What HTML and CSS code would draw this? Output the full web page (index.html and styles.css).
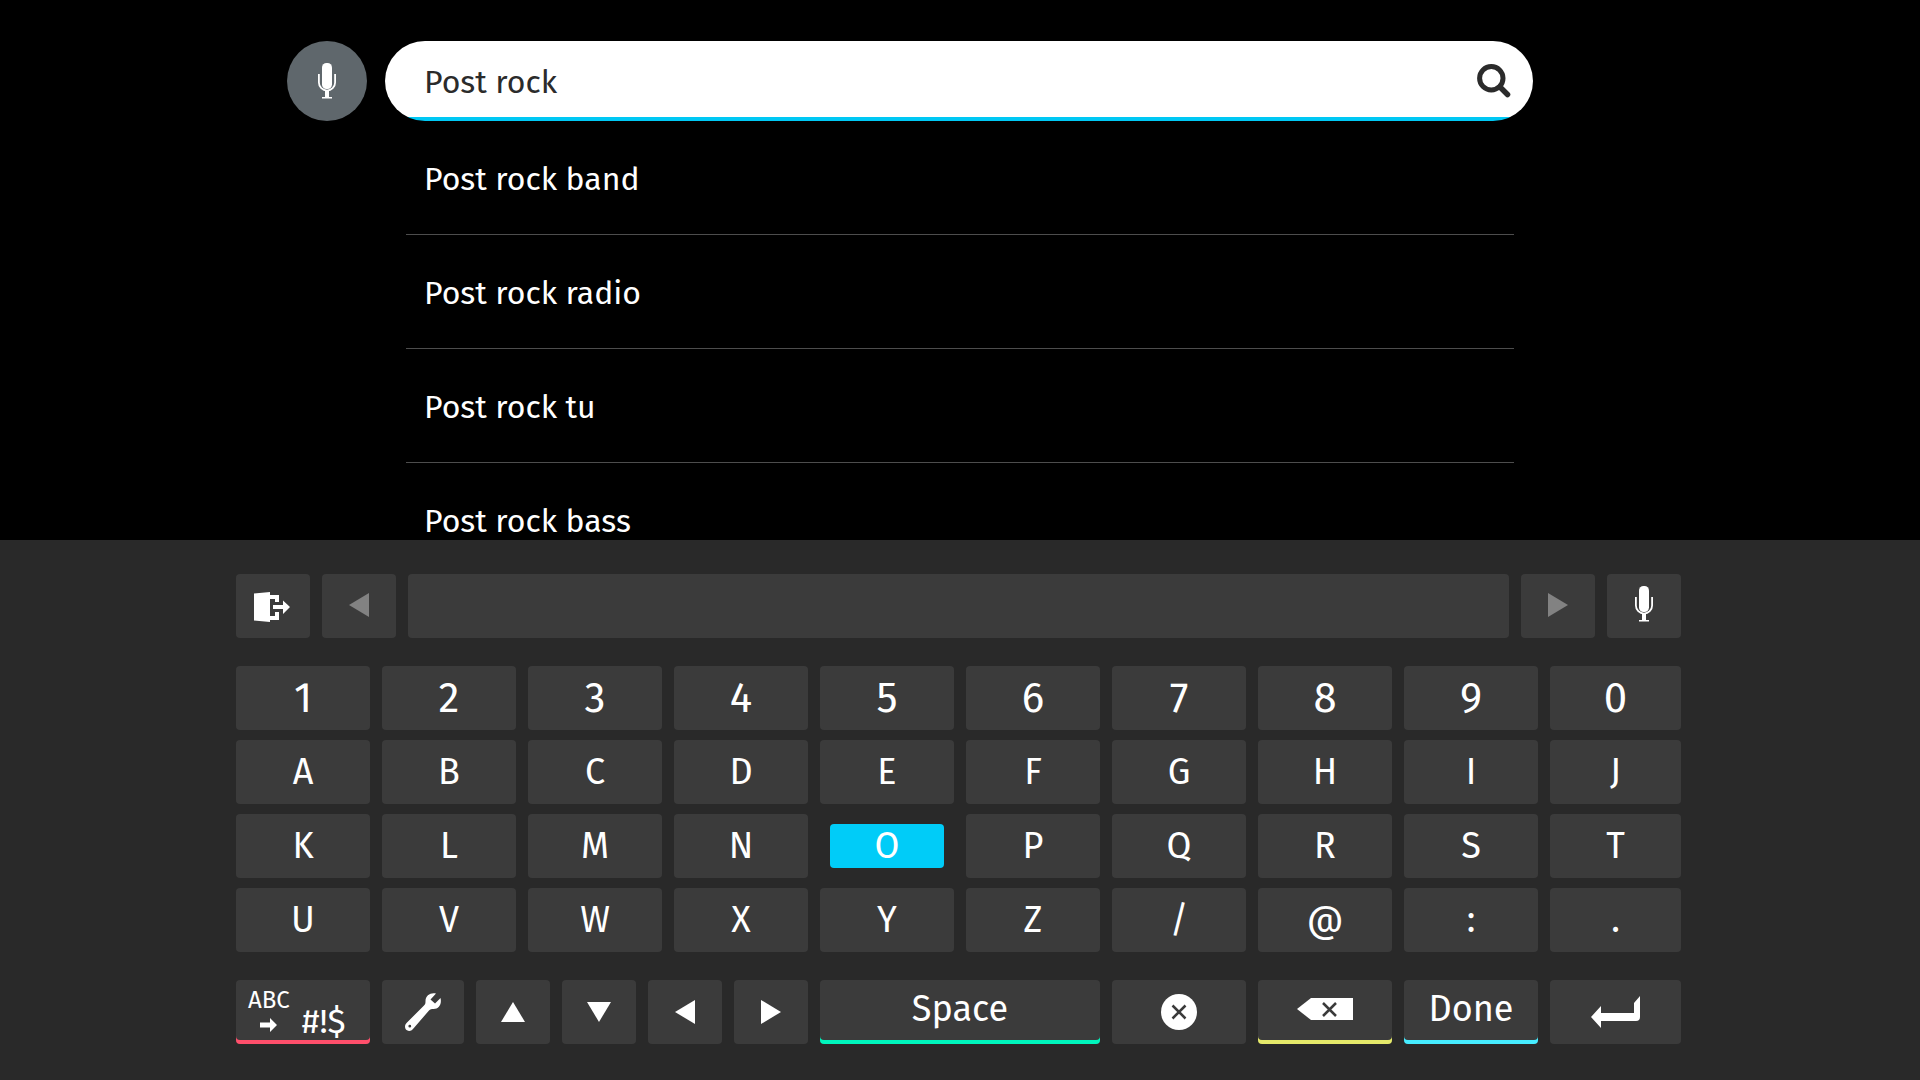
FILE: index.html
```html
<!DOCTYPE html>
<html lang="en">
<head>
<meta charset="utf-8">
<title>Search</title>
<link rel="stylesheet" href="styles.css">
</head>
<body>
<svg class="symbols" aria-hidden="true">
  <symbol id="mic" viewBox="0 0 18 36">
    <rect x="4" y="0" width="10" height="26" rx="4.5" fill="currentColor"/>
    <path d="M.9 11v8.500a8.100 8.100 0 0 0 16.200 0V11" fill="none" stroke="currentColor" stroke-width="1.800"/>
    <path d="M7 28h4v6h3v1.400H4V34h3z" fill="currentColor"/>
  </symbol>
  <symbol id="left" viewBox="0 0 20 24"><path d="M0 12 20 0v24z" fill="currentColor"/></symbol>
  <symbol id="right" viewBox="0 0 20 24"><path d="M20 12 0 0v24z" fill="currentColor"/></symbol>
</svg>
<main class="results">
  <form class="search">
    <button type="button" class="voice" aria-label="Voice search"><svg width="18" height="36"><use href="#mic"/></svg></button>
    <div class="field">
      <input class="query" type="text" value="Post rock" aria-label="Search">
      <button type="button" class="submit" aria-label="Submit search">
        <svg width="34" height="34" viewBox="0 0 34 34" fill="none" stroke="currentColor">
          <circle cx="14.300" cy="14.300" r="11.700" stroke-width="5"/>
          <path d="M23 23l7.500 7.500" stroke-width="5.500" stroke-linecap="round"/>
        </svg>
      </button>
    </div>
  </form>
  <ul class="suggestions">
    <li><a href="#">Post rock band</a></li>
    <li><a href="#">Post rock radio</a></li>
    <li><a href="#">Post rock tu</a></li>
    <li><a href="#">Post rock bass</a></li>
  </ul>
</main>
<section class="keyboard" aria-label="On-screen keyboard">
  <div class="row toolbar">
    <button class="key lowered" aria-label="Exit">
      <svg width="36" height="30" viewBox="0 0 36 30" fill="currentColor">
        <path d="M0 1.500 16 0v30L0 28.500z"/>
        <path d="M16 3h9v7h-4V7h-5zM16 28h9v-8h-4v4h-5zM19 13h10V8.500l7 6.500-7 7v-5H19z"/>
      </svg>
    </button>
    <button class="key dim" aria-label="Previous"><svg width="20" height="24"><use href="#left"/></svg></button>
    <output class="key"></output>
    <button class="key dim" aria-label="Next"><svg width="20" height="24"><use href="#right"/></svg></button>
    <button class="key raised" aria-label="Voice input"><svg width="18" height="36"><use href="#mic"/></svg></button>
  </div>
  <div class="rows">
    <div class="row digits">
      <button class="key">1</button><button class="key">2</button><button class="key">3</button><button class="key">4</button><button class="key">5</button><button class="key">6</button><button class="key">7</button><button class="key">8</button><button class="key">9</button><button class="key">0</button>
    </div>
    <div class="row">
      <button class="key">A</button><button class="key">B</button><button class="key">C</button><button class="key">D</button><button class="key">E</button><button class="key">F</button><button class="key">G</button><button class="key">H</button><button class="key">I</button><button class="key">J</button>
    </div>
    <div class="row">
      <button class="key">K</button><button class="key">L</button><button class="key">M</button><button class="key">N</button><button class="key focused">O</button><button class="key">P</button><button class="key">Q</button><button class="key">R</button><button class="key">S</button><button class="key">T</button>
    </div>
    <div class="row">
      <button class="key">U</button><button class="key">V</button><button class="key">W</button><button class="key">X</button><button class="key">Y</button><button class="key">Z</button><button class="key">/</button><button class="key">@</button><button class="key">:</button><button class="key">.</button>
    </div>
  </div>
  <div class="row actions">
    <button class="key red mode">
      <span class="from">ABC
        <svg width="18" height="14" viewBox="0 0 18 14" fill="currentColor"><path d="M0 4.500h10V0l7 7-7 7V9.500H0z"/></svg>
      </span>
      <span class="to">#!$</span>
    </button>
    <button class="key" aria-label="Settings">
      <svg width="36" height="38" viewBox="0 0 36 38" fill="currentColor">
        <path fill-rule="evenodd" d="M31 .5C26-.8 20.500 2 20.500 8c0 2 0 3-1.500 4.500L1.500 30C-1 33 0 36 2 37.300c2 1.200 4.500.7 6-1.300l16-18.500c1.300-1.400 2.500-1.500 4.500-1.500 5.500 0 8.500-5 7-11L30 10.500 25.500 6.500zM4.800 31.800a1.400 1.400 0 1 1 0 2.800 1.400 1.400 0 0 1 0-2.800z"/>
      </svg>
    </button>
    <button class="key" aria-label="Up"><svg width="24" height="20" viewBox="0 0 24 20"><path d="M12 0 24 20H0z" fill="currentColor"/></svg></button>
    <button class="key" aria-label="Down"><svg width="24" height="20" viewBox="0 0 24 20"><path d="M12 20 24 0H0z" fill="currentColor"/></svg></button>
    <button class="key" aria-label="Left"><svg width="20" height="24"><use href="#left"/></svg></button>
    <button class="key" aria-label="Right"><svg width="20" height="24"><use href="#right"/></svg></button>
    <button class="key green">Space</button>
    <button class="key" aria-label="Clear">
      <svg width="36" height="36" viewBox="0 0 36 36"><circle cx="18" cy="18" r="18" fill="currentColor"/><path d="M11.500 11.500l13 13m0-13l-13 13" stroke="#3b3b3b" stroke-width="2.500"/></svg>
    </button>
    <button class="key yellow" aria-label="Backspace">
      <svg width="56" height="22" viewBox="0 0 56 22"><path d="M0 11 14 0h42v22H14z" fill="currentColor"/><path d="M26 5l13 13m0-13L26 18" stroke="#3b3b3b" stroke-width="2.500"/></svg>
    </button>
    <button class="key cyan">Done</button>
    <button class="key" aria-label="Enter">
      <svg width="49" height="32" viewBox="0 0 49 32" fill="currentColor"><path d="M0 21 10 10v7h33V7l6-7v21q0 4-4 4H10v7z"/></svg>
    </button>
  </div>
</section>
</body>
</html>
```
FILE: styles.css
```css
* {
  box-sizing: border-box;
}

body {
  margin: 0;
  height: 100vh;
  display: flex;
  flex-direction: column;
  background: #000;
  color: #fff;
  font-family: "Fira Sans", "Noto Sans", sans-serif;
}

button,
input {
  border: 0;
  padding: 0;
  margin: 0;
  background: none;
  color: inherit;
  font: inherit;
  outline: 0;
}

svg {
  display: block;
}

.symbols {
  display: none;
}

.results {
  flex: 1 1 0;
  min-height: 0;
  overflow: hidden;
  padding-top: 41px;
}

.search {
  display: flex;
  gap: 18px;
  margin: 0 387px 0 287px;
}

.voice {
  display: flex;
  align-items: center;
  justify-content: center;
  width: 80px;
  height: 80px;
  border-radius: 50%;
  background: #5f676c;
}

.field {
  flex: 1;
  display: flex;
  align-items: center;
  height: 80px;
  padding: 0 22px 0 39px;
  border-radius: 40px;
  background: linear-gradient(to top, #00c8f4 4px, #fff 4px);
  color: #2b2b2b;
}

.query {
  flex: 1;
  min-width: 0;
  padding-top: 2px;
  font-size: 32px;
  line-height: 40px;
}

.suggestions {
  list-style: none;
  margin: 0 406px;
  padding: 0;
}

.suggestions li {
  border-bottom: 1px solid #4d4d4d;
}

.suggestions a {
  display: block;
  padding: 38px 18px 35px;
  font-size: 32px;
  line-height: 40px;
  color: inherit;
  text-decoration: none;
}

.keyboard {
  display: flex;
  flex-direction: column;
  gap: 28px;
  padding: 34px 239px 36px 236px;
  background: #292929;
}

.rows {
  display: flex;
  flex-direction: column;
  gap: 10px;
}

.row {
  display: grid;
  grid-template-columns: repeat(9, 134fr) 131fr;
  grid-auto-rows: 64px;
  gap: 12px;
}

.toolbar {
  grid-template-columns: 74fr 74fr 1101fr 74fr 74fr;
}

.actions {
  grid-template-columns: 134fr 82fr repeat(4, 74fr) 280fr repeat(3, 134fr) 131fr;
}

.key {
  min-width: 0;
  display: flex;
  align-items: center;
  justify-content: center;
  border-radius: 4px;
  background: #3b3b3b;
  font-size: 36px;
  line-height: 44px;
}

.digits .key {
  font-size: 42px;
}

.dim {
  padding-bottom: 2px;
  color: #828282;
}

.raised {
  padding-bottom: 4px;
}

.lowered {
  padding: 2px 2px 0 0;
}

.focused {
  margin: 10px;
  background: #00ccf8;
}

.red,
.green,
.yellow,
.cyan {
  padding-bottom: 6px;
}

.red {
  box-shadow: inset 0 -4px #ff4f6b;
}

.green {
  box-shadow: inset 0 -4px #00f5bd;
}

.yellow {
  box-shadow: inset 0 -4px #e5e96a;
}

.cyan {
  box-shadow: inset 0 -4px #46ecff;
}

.mode {
  justify-content: flex-start;
  align-items: flex-end;
  gap: 12px;
  padding: 0 0 4px 12px;
}

.from {
  display: flex;
  flex-direction: column;
  align-items: center;
  gap: 4px;
  padding-bottom: 8px;
  font-size: 24px;
  line-height: 28px;
}

.to {
  font-size: 34px;
  line-height: 36px;
}
```
